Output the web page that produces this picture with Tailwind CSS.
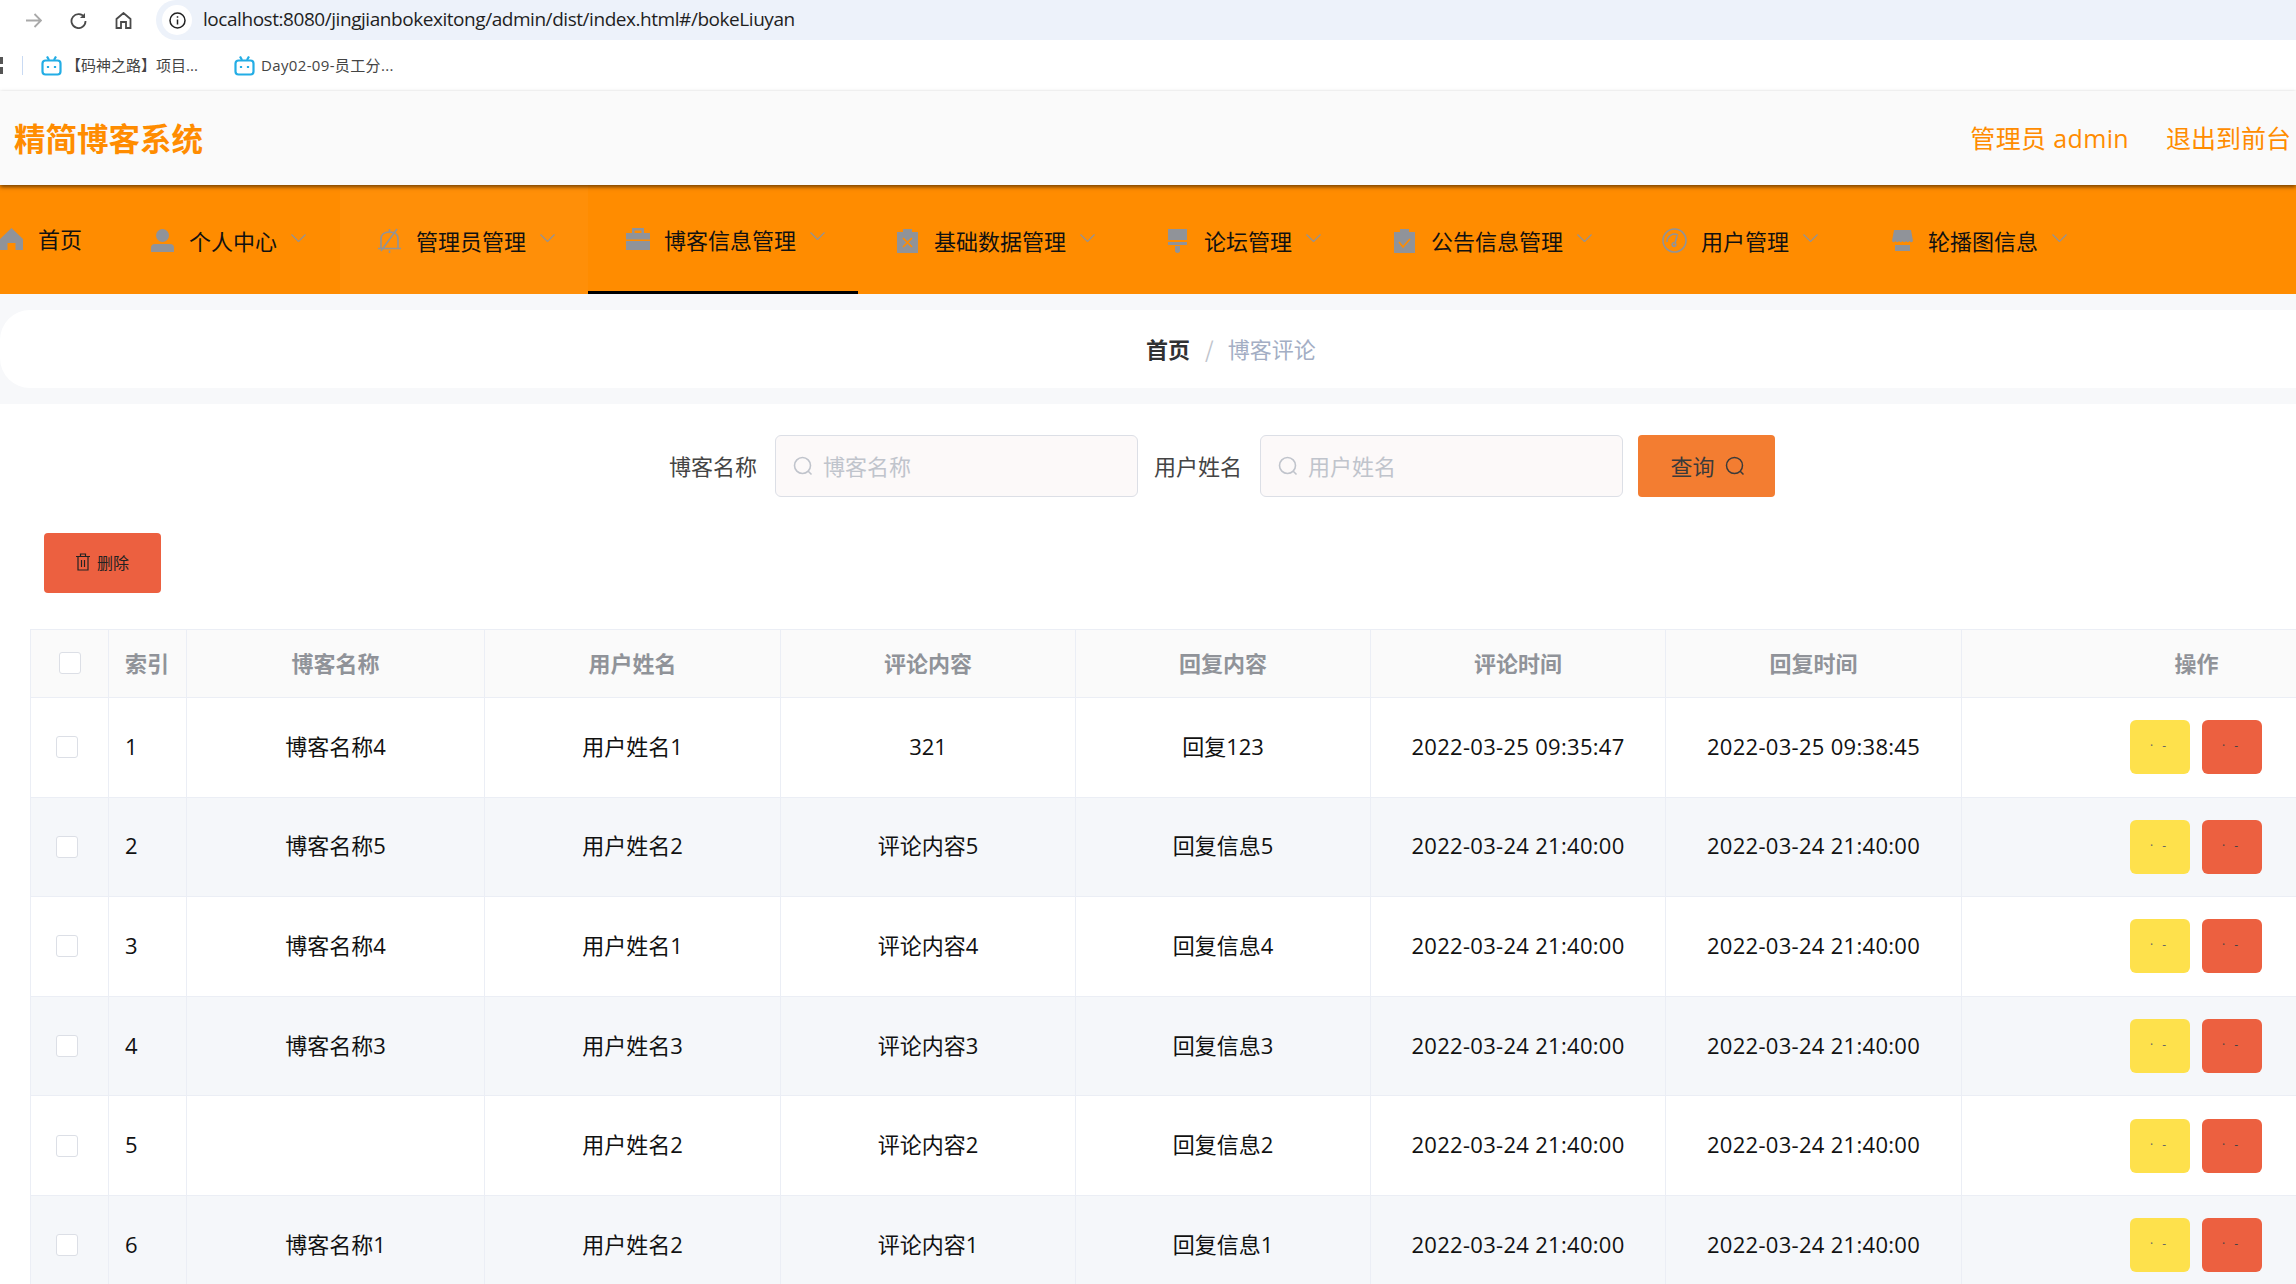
<!DOCTYPE html>
<html lang="en">
<head>
  <meta charset="UTF-8" />
  <title>精简博客系统</title>
  <script src="https://cdn.jsdelivr.net/npm/@tailwindcss/browser@4"></script>
</head>
<body class="w-[2296px] h-[1284px] overflow-hidden bg-white font-['Open_Sans','Noto_Sans_CJK_SC',sans-serif]">

  <!-- browser address bar -->
  <div class="h-[40px] flex items-center bg-white">
    <div class="w-[156px] shrink-0 flex items-center pl-[25px] gap-[28px]">
      <svg class="w-[17px] h-[17px]" viewBox="0 0 17 17" fill="none" stroke="#a9a9a9" stroke-width="1.8"><path d="M1 8.5h15M9.5 2l6.5 6.5-6.500 6.500"/></svg>
      <svg class="w-[17px] h-[17px]" viewBox="0 0 17 17" fill="none" stroke="#4a4a4a" stroke-width="1.8"><path d="M14.5 5.5A7 7 0 1 0 15.5 9"/><path d="M15 1v5h-5" fill="#4a4a4a" stroke="none"/></svg>
      <svg class="w-[17px] h-[17px]" viewBox="0 0 17 17" fill="none" stroke="#4a4a4a" stroke-width="1.8"><path d="M1.5 16V7l7-6 7 6v9h-4.500v-6h-5v6z"/></svg>
    </div>
    <div class="flex-1 h-[40px] flex items-center bg-[#edf2fa] rounded-l-[20px]">
      <div class="ml-[6px] w-[30px] h-[30px] rounded-full bg-white flex items-center justify-center">
        <svg class="w-[17px] h-[17px]" viewBox="0 0 17 17" fill="none" stroke="#222" stroke-width="1.5"><circle cx="8.500" cy="8.500" r="7.500"/><path d="M8.500 7.500v5M8.500 4.200v1.600"/></svg>
      </div>
      <span class="ml-[11px] pb-[2px] text-[19px] tracking-[-0.45px] text-[#1f1f1f]">localhost:8080/jingjianbokexitong/admin/dist/index.html#/bokeLiuyan</span>
    </div>
  </div>

  <!-- bookmarks -->
  <div class="h-[51px] flex items-center bg-white text-[15px] text-[#444] whitespace-nowrap">
    <div class="w-[3px] h-[17px] flex flex-col justify-between">
      <div class="h-[7px] bg-[#555]"></div>
      <div class="h-[7px] bg-[#555]"></div>
    </div>
    <div class="w-[1px] h-[19px] bg-[#c9daf3] ml-[19px]"></div>
    <svg class="w-[21px] h-[20px] ml-[18px]" viewBox="0 0 21 20" fill="none" stroke="#23ade5" stroke-width="2.200"><rect x="1.500" y="4.500" width="18" height="14" rx="3"/><path d="M6 0.500l2 3.500M15 0.500l-2 3.500"/><path d="M7 10v2M14 10v2"/></svg>
    <span class="ml-[4px] w-[135px]">【码神之路】项目...</span>
    <svg class="w-[21px] h-[20px] ml-[33px]" viewBox="0 0 21 20" fill="none" stroke="#23ade5" stroke-width="2.200"><rect x="1.500" y="4.500" width="18" height="14" rx="3"/><path d="M6 0.500l2 3.500M15 0.500l-2 3.500"/><path d="M7 10v2M14 10v2"/></svg>
    <span class="ml-[6px] tracking-[0.35px]">Day02-09-员工分...</span>
  </div>

  <!-- app header -->
  <header class="relative z-10 h-[94px] bg-[#fafafa] flex items-center justify-between pl-[14px] pr-[5px] shadow-[0_2px_4px_rgba(0,0,0,0.55)] text-[#ff8c00]">
    <div class="text-[31.5px] font-bold font-['Noto_Sans_CJK_SC',sans-serif]">精简博客系统</div>
    <div class="flex items-center text-[25px] gap-[37px] pt-[1px]">
      <span class="tracking-[0.35px]">管理员 admin</span>
      <span>退出到前台</span>
    </div>
  </header>

  <!-- nav menu -->
  <nav class="h-[109px] bg-[#ff8c00] flex -ml-[38px] text-[22px] text-[#111] font-['Noto_Sans_CJK_SC',sans-serif]">
    <a class="w-[151px] h-full flex items-center pl-[38px] pb-[2px]">
      <svg class="w-[23px] h-[22px] mr-[15px]" viewBox="0 0 23 22" fill="#909399"><path d="M11.500 0L23 11v11h-7.500v-7h-8v7H0V11z"/></svg>首页
    </a>
    <a class="w-[227px] h-full flex items-center pl-[38px] pt-[2px]">
      <svg class="w-[23px] h-[23px] mr-[15px]" viewBox="0 0 23 23" fill="#909399"><ellipse cx="11.500" cy="6.500" rx="6.500" ry="6.500"/><path d="M0 23v-4q0-4 4-4h15q4 0 4 4v4z"/></svg>个人中心
      <svg class="w-[15px] h-[8px] ml-[14px] mb-[6px]" viewBox="0 0 15 8" fill="none" stroke="#909399" stroke-width="1.200"><path d="M0.500 0.500l7 7 7-7"/></svg>
    </a>
    <a class="w-[248px] h-full flex items-center pl-[37px] pt-[2px] bg-[#ff8f08]">
      <svg class="w-[25px] h-[25px] mr-[14px]" viewBox="0 0 25 25" fill="none" stroke="#909399" stroke-width="1.600"><path d="M4 20V11q0-7 8.500-7T21 11v9"/><path d="M1 20.500h23M12.500 22.500v2.500M12.500 1v3M20 1L4 23"/></svg>管理员管理
      <svg class="w-[15px] h-[8px] ml-[14px] mb-[6px]" viewBox="0 0 15 8" fill="none" stroke="#909399" stroke-width="1.200"><path d="M0.500 0.500l7 7 7-7"/></svg>
    </a>
    <a class="w-[270px] h-full flex items-center pl-[38px] pt-[2px] border-b-[3px] border-black">
      <svg class="w-[24px] h-[22px] mr-[14px]" viewBox="0 0 24 22" fill="#909399"><path d="M6 5V0h12v5h-2.500V2.500h-7V5z"/><path d="M0 5h24v6.500H0zM0 13h24v9H0z"/></svg>博客信息管理
      <svg class="w-[15px] h-[8px] ml-[14px] mb-[6px]" viewBox="0 0 15 8" fill="none" stroke="#909399" stroke-width="1.200"><path d="M0.500 0.500l7 7 7-7"/></svg>
    </a>
    <a class="w-[271px] h-full flex items-center pl-[39px] pt-[2px]">
      <svg class="w-[21px] h-[24px] mr-[16px]" viewBox="0 0 21 24" fill="#909399"><path d="M6 0h9v4H6z"/><path d="M0 3h21v21H0z"/><path d="M6 9l9 9M15 9l-9 9" stroke="#ff8c00" stroke-width="1.600"/></svg>基础数据管理
      <svg class="w-[15px] h-[8px] ml-[14px] mb-[6px]" viewBox="0 0 15 8" fill="none" stroke="#909399" stroke-width="1.200"><path d="M0.500 0.500l7 7 7-7"/></svg>
    </a>
    <a class="w-[227px] h-full flex items-center pl-[39px] pt-[2px]">
      <svg class="w-[19px] h-[24px] mr-[17px]" viewBox="0 0 19 24" fill="#909399"><path d="M0 0h19v11H0zM0 13h19v3H0zM7 17h5v5.500q-2.500 3-5 0z"/></svg>论坛管理
      <svg class="w-[15px] h-[8px] ml-[14px] mb-[6px]" viewBox="0 0 15 8" fill="none" stroke="#909399" stroke-width="1.200"><path d="M0.500 0.500l7 7 7-7"/></svg>
    </a>
    <a class="w-[268px] h-full flex items-center pl-[38px] pt-[2px]">
      <svg class="w-[21px] h-[24px] mr-[16px]" viewBox="0 0 21 24" fill="#909399"><path d="M6 0h9v4H6z"/><path d="M0 3h21v21H0z"/><path d="M5 13l4 5 7-8" fill="none" stroke="#ff8c00" stroke-width="1.600"/></svg>公告信息管理
      <svg class="w-[15px] h-[8px] ml-[14px] mb-[6px]" viewBox="0 0 15 8" fill="none" stroke="#909399" stroke-width="1.200"><path d="M0.500 0.500l7 7 7-7"/></svg>
    </a>
    <a class="w-[229px] h-full flex items-center pl-[38px] pt-[2px]">
      <svg class="w-[25px] h-[25px] mr-[14px]" viewBox="0 0 25 25" fill="none" stroke="#909399" stroke-width="1.600"><circle cx="12.500" cy="12.500" r="11.500"/><path d="M5 14a7.500 7.500 0 0 1 11-7"/><circle cx="12" cy="16.500" r="1.800"/><path d="M13 15l2-7"/></svg>用户管理
      <svg class="w-[15px] h-[8px] ml-[14px] mb-[6px]" viewBox="0 0 15 8" fill="none" stroke="#909399" stroke-width="1.200"><path d="M0.500 0.500l7 7 7-7"/></svg>
    </a>
    <a class="w-[248px] h-full flex items-center pl-[39px] pt-[2px]">
      <svg class="w-[21px] h-[21px] mr-[15px]" viewBox="0 0 21 21" fill="#909399"><path d="M2 0h17l2 11q-1.700 2.500-3.500 0-1.700 2.500-3.500 0-1.700 2.500-3.500 0-1.700 2.500-3.500 0-1.700 2.500-3.500 0-1.700 2.500-3.500 0z"/><path d="M3 15h15v6H3z"/></svg>轮播图信息
      <svg class="w-[15px] h-[8px] ml-[14px] mb-[6px]" viewBox="0 0 15 8" fill="none" stroke="#909399" stroke-width="1.200"><path d="M0.500 0.500l7 7 7-7"/></svg>
    </a>
  </nav>

  <!-- breadcrumb -->
  <div class="bg-[#f7f8fa] py-[16px]">
    <div class="h-[78px] bg-white rounded-l-[30px] flex items-center pl-[1146px] pb-[2px] text-[22px] font-['Noto_Sans_CJK_SC',sans-serif]">
      <span class="font-bold text-[#303133]">首页</span>
      <span class="ml-[15px] mr-[14px] text-[#c0c4cc]">/</span>
      <span class="text-[#a3aec4]">博客评论</span>
    </div>
  </div>

  <!-- search form -->
  <div class="flex items-center h-[62px] mt-[31px] pl-[669px] text-[22px] leading-[28px] text-[#444] font-['Noto_Sans_CJK_SC',sans-serif]">
    <label class="pb-[3px]">博客名称</label>
    <div class="ml-[18px] w-[363px] h-full flex items-center bg-[#fcf9f9] border border-[#dcdfe6] rounded-[6px] pl-[17px] text-[#c0c4cc]">
      <svg class="w-[20px] h-[20px] mr-[10px]" viewBox="0 0 20 20" fill="none" stroke="#c0c4cc" stroke-width="1.600"><circle cx="9.500" cy="9.500" r="8"/><path d="M15 15l3.500 3.500"/></svg><span class="pb-[3px]">博客名称</span>
    </div>
    <label class="ml-[16px] pb-[3px]">用户姓名</label>
    <div class="ml-[18px] w-[363px] h-full flex items-center bg-[#fcf9f9] border border-[#dcdfe6] rounded-[6px] pl-[17px] text-[#c0c4cc]">
      <svg class="w-[20px] h-[20px] mr-[10px]" viewBox="0 0 20 20" fill="none" stroke="#c0c4cc" stroke-width="1.600"><circle cx="9.500" cy="9.500" r="8"/><path d="M15 15l3.500 3.500"/></svg><span class="pb-[3px]">用户姓名</span>
    </div>
    <button class="ml-[15px] w-[137px] h-full flex items-center justify-center bg-[#f37d31] rounded-[4px] text-[#3a3a3a] gap-[10px]">
      <span class="pb-[3px] pl-[2px]">查询</span>
      <svg class="w-[20px] h-[20px]" viewBox="0 0 20 20" fill="none" stroke="#3a3a3a" stroke-width="1.500"><circle cx="9.500" cy="9.500" r="8"/><path d="M15 15l3.500 3.500"/></svg>
    </button>
  </div>

  <!-- delete -->
  <button class="block ml-[44px] mt-[36px] w-[117px] h-[60px] bg-[#ec6040] rounded-[4px] font-['Noto_Sans_CJK_SC',sans-serif]">
    <span class="flex items-center justify-center gap-[7px] text-[16px] leading-[20px] text-[#222] pb-[2px]">
      <svg class="w-[14px] h-[18px]" viewBox="0 0 14 18" fill="none" stroke="#222" stroke-width="1.200"><path d="M0 3.500h14M4.500 3.500V1h5v2.500M2 3.500V17h10V3.500M5.500 7v7M8.500 7v7"/></svg>
      删除
    </span>
  </button>

  <!-- table -->
  <div class="ml-[30px] mt-[36px] overflow-hidden">
    <table class="w-[2401px] table-fixed border-collapse text-[22px] text-[#111] text-center">
      <colgroup>
        <col class="w-[78px]" /><col class="w-[78px]" /><col class="w-[298px]" /><col class="w-[296px]" /><col class="w-[295px]" /><col class="w-[295px]" /><col class="w-[295px]" /><col class="w-[296px]" /><col class="w-[470px]" />
      </colgroup>
      <thead>
        <tr class="h-[68px] bg-[#fafafa] text-[#909399] font-['Noto_Sans_CJK_SC',sans-serif]">
          <th class="border border-[#ebeef5] pb-[2px]"><div class="w-[22px] h-[22px] ml-[28px] bg-white border border-[#dcdfe6] rounded-[3px]"></div></th>
          <th class="border border-[#ebeef5] text-left pl-[16px] pb-[2px]">索引</th>
          <th class="border border-[#ebeef5] pb-[2px]">博客名称</th>
          <th class="border border-[#ebeef5] pb-[2px]">用户姓名</th>
          <th class="border border-[#ebeef5] pb-[2px]">评论内容</th>
          <th class="border border-[#ebeef5] pb-[2px]">回复内容</th>
          <th class="border border-[#ebeef5] pb-[2px]">评论时间</th>
          <th class="border border-[#ebeef5] pb-[2px]">回复时间</th>
          <th class="border border-[#ebeef5] pb-[2px]">操作</th>
        </tr>
      </thead>
      <tbody id="rows"></tbody>
    </table>
  </div>

  <script>
    const comments = [
      ['博客名称4', '用户姓名1', '321', '回复123', '2022-03-25 09:35:47', '2022-03-25 09:38:45'],
      ['博客名称5', '用户姓名2', '评论内容5', '回复信息5', '2022-03-24 21:40:00', '2022-03-24 21:40:00'],
      ['博客名称4', '用户姓名1', '评论内容4', '回复信息4', '2022-03-24 21:40:00', '2022-03-24 21:40:00'],
      ['博客名称3', '用户姓名3', '评论内容3', '回复信息3', '2022-03-24 21:40:00', '2022-03-24 21:40:00'],
      ['', '用户姓名2', '评论内容2', '回复信息2', '2022-03-24 21:40:00', '2022-03-24 21:40:00'],
      ['博客名称1', '用户姓名2', '评论内容1', '回复信息1', '2022-03-24 21:40:00', '2022-03-24 21:40:00'],
    ];
    document.getElementById('rows').innerHTML = comments.map((row, i) => `
      <tr class="h-[99.6px] ${i % 2 ? 'bg-[#f5f7fa]' : 'bg-white'}">
        <td class="border border-[#ebeef5]"><div class="w-[22px] h-[22px] ml-[25px] bg-white border border-[#dcdfe6] rounded-[3px]"></div></td>
        <td class="border border-[#ebeef5] text-left pl-[16px] pb-[2px]">${i + 1}</td>
        ${row.map((c, j) => `<td class="border border-[#ebeef5] pb-[2px] ${j > 3 ? 'tracking-[0.3px]' : ''}">${c}</td>`).join('')}
        <td class="border border-[#ebeef5] pr-[2px]">
          <div class="flex justify-center gap-[12px]">
            <button class="w-[60px] h-[54px] bg-[#fee14c] rounded-[6px] text-[12px] tracking-[3px] leading-none text-[#666] pb-[2px]">· -</button>
            <button class="w-[60px] h-[54px] bg-[#ec6040] rounded-[6px] text-[12px] tracking-[3px] leading-none text-[#444] pb-[2px]">· -</button>
          </div>
        </td>
      </tr>`).join('');
  </script>
</body>
</html>
